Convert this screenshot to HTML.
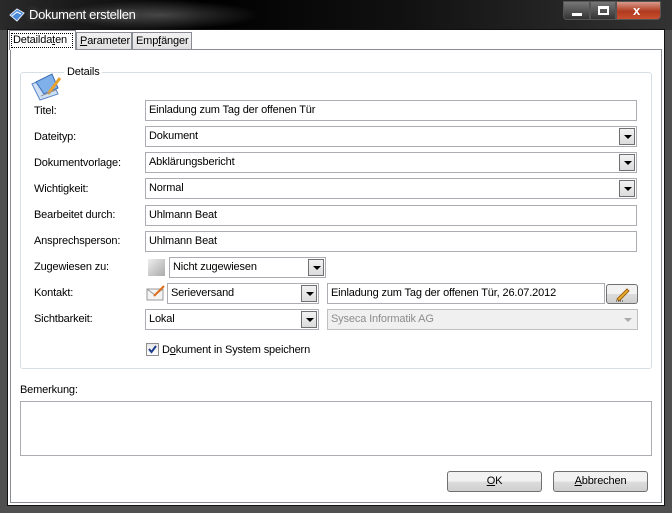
<!DOCTYPE html>
<html><head><meta charset="utf-8"><style>
*{box-sizing:border-box;margin:0;padding:0}
body{width:672px;height:513px;overflow:hidden;background:#505050;font-family:"Liberation Sans",sans-serif;font-size:11px;letter-spacing:-0.15px;color:#000;position:relative}
.a{position:absolute}
.t{position:absolute;white-space:nowrap;line-height:13px}
.in{position:absolute;border:1px solid #abadb3;background:#fff;height:21px;padding:3px 0 0 3px;white-space:nowrap;line-height:13px}
.dd{position:absolute;right:1px;top:1px;width:16px;height:17px;border:1px solid #707070;background:linear-gradient(#f2f2f2,#dcdcdc)}
.dd:after{content:"";position:absolute;left:4px;top:6px;border-left:4px solid transparent;border-right:4px solid transparent;border-top:4px solid #000}
.btn{position:absolute;border:1px solid #707070;border-radius:3px;background:linear-gradient(#f2f2f2 50%,#dddddd 50%,#cfcfcf);text-align:center;line-height:19px}
</style></head><body>
<div class="a" style="left:0;top:0;width:672px;height:30px;background:linear-gradient(90deg,#2a2a2a,#000 30%,#111 60%,#333)"></div>
<div class="a" style="left:60px;top:0;width:200px;height:30px;background:radial-gradient(ellipse at center,rgba(255,255,255,.25),rgba(255,255,255,0) 70%)"></div>
<svg class="a" style="left:8px;top:7px" width="18" height="16"><path d="M2 8 L9 2 L16 6 L9 14 Z" fill="#4a8ad8" stroke="#dfe9f7"/><path d="M4 9 L9 5 L13 7" stroke="#fff" fill="none"/></svg>
<div class="t" style="left:29px;top:8px;color:#fff;font-size:13px;letter-spacing:-0.3px;text-shadow:0 0 6px #fff5">Dokument erstellen</div>
<div class="a" style="left:563px;top:1px;width:27px;height:19px;border:1px solid #555;border-radius:0 0 0 4px;background:linear-gradient(#777,#333)"><div class="a" style="left:8px;top:11px;width:10px;height:3px;background:#fff"></div></div>
<div class="a" style="left:590px;top:1px;width:26px;height:19px;border:1px solid #555;background:linear-gradient(#777,#333)"><div class="a" style="left:7px;top:4px;width:11px;height:9px;border:2px solid #fff;border-top-width:3px"></div></div>
<div class="a" style="left:616px;top:1px;width:45px;height:19px;border:1px solid #555;border-radius:0 0 4px 0;background:linear-gradient(#d99a8a,#b03a20 55%,#c85030)"><div class="t" style="left:16px;top:2px;color:#fff;font-weight:bold;font-size:13px">x</div></div>
<div class="a" style="left:7px;top:29px;width:658px;height:477px;background:#fff;border:1px solid #111"></div>
<div class="a" style="left:10px;top:49px;width:652px;height:454px;border:1px solid #898c95;background:#fff"></div>
<div class="a" style="left:76px;top:32px;width:56px;height:18px;border:1px solid #898c95;background:linear-gradient(#f2f2f2,#e0e0e0)"></div>
<div class="t" style="left:80px;top:35px"><u>P</u>arameter</div>
<div class="a" style="left:132px;top:32px;width:60px;height:18px;border:1px solid #898c95;background:linear-gradient(#f2f2f2,#e0e0e0)"></div>
<div class="t" style="left:136px;top:35px">Emp<u>f</u>änger</div>
<div class="a" style="left:9px;top:30px;width:67px;height:20px;border:1px solid #898c95;border-bottom:none;background:#fff"></div>
<div class="a" style="left:11px;top:33px;width:62px;height:15px;border:1px dotted #000"></div>
<div class="t" style="left:13px;top:34px">Detailda<u>t</u>en</div>
<div class="a" style="left:20px;top:72px;width:632px;height:297px;border:1px solid #d5dfe5;border-radius:3px"></div>
<div class="a" style="left:64px;top:68px;width:38px;height:10px;background:#fff"></div>
<div class="t" style="left:67px;top:66px">Details</div>
<svg class="a" style="left:28px;top:70px" width="36" height="32"><path d="M4 14 L22 6 L30 24 L12 30 Z" fill="#cfe0f5" stroke="#5a86c8"/><path d="M8 12 L24 4 L30 18 L16 24 Z" fill="#7fb0ea" stroke="#3b6db5"/><path d="M20 24 L32 8" stroke="#e8a030" stroke-width="3"/><path d="M13 26 L28 20" stroke="#999"/></svg>
<div class="t" style="left:34px;top:105px">Titel:</div>
<div class="t" style="left:34px;top:131px">Dateityp:</div>
<div class="t" style="left:34px;top:157px">Dokumentvorlage:</div>
<div class="t" style="left:34px;top:183px">Wichtigkeit:</div>
<div class="t" style="left:34px;top:209px">Bearbeitet durch:</div>
<div class="t" style="left:34px;top:235px">Ansprechsperson:</div>
<div class="t" style="left:34px;top:261px">Zugewiesen zu:</div>
<div class="t" style="left:34px;top:287px">Kontakt:</div>
<div class="t" style="left:34px;top:313px">Sichtbarkeit:</div>
<div class="in" style="left:145px;top:100px;width:492px">Einladung zum Tag der offenen Tür</div>
<div class="in" style="left:145px;top:126px;width:492px">Dokument<div class="dd"></div></div>
<div class="in" style="left:145px;top:152px;width:492px">Abklärungsbericht<div class="dd"></div></div>
<div class="in" style="left:145px;top:178px;width:492px">Normal<div class="dd"></div></div>
<div class="in" style="left:145px;top:205px;width:492px">Uhlmann Beat</div>
<div class="in" style="left:145px;top:231px;width:492px">Uhlmann Beat</div>
<div class="a" style="left:148px;top:259px;width:17px;height:17px;background:linear-gradient(135deg,#eee,#aaa)"></div>
<div class="in" style="left:169px;top:257px;width:157px">Nicht zugewiesen<div class="dd"></div></div>
<svg class="a" style="left:146px;top:285px" width="20" height="16"><rect x="1" y="4" width="16" height="11" fill="#f4f4f4" stroke="#999"/><path d="M1 4 L9 10 L17 4" stroke="#999" fill="none"/><path d="M8 11 L18 1" stroke="#e07020" stroke-width="2"/></svg>
<div class="in" style="left:167px;top:283px;width:152px">Serieversand<div class="dd"></div></div>
<div class="in" style="left:327px;top:283px;width:278px">Einladung zum Tag der offenen Tür, 26.07.2012</div>
<div class="btn" style="left:606px;top:284px;width:32px;height:20px"><svg width="20" height="16" style="margin-top:1px"><path d="M5 13 L15 3 L17 5 L7 15 Z" fill="#e8b030" stroke="#a06010"/><path d="M4 15 L12 15" stroke="#333" stroke-dasharray="1 1"/></svg></div>
<div class="in" style="left:145px;top:309px;width:174px">Lokal<div class="dd"></div></div>
<div class="in" style="left:327px;top:309px;width:311px;background:#f0f0f0;border-color:#c0c0c0;color:#8d8d8d">Syseca Informatik AG<div class="a" style="right:5px;top:8px;border-left:4px solid transparent;border-right:4px solid transparent;border-top:4px solid #aaa"></div></div>
<div class="a" style="left:146px;top:343px;width:13px;height:13px;border:1px solid #8f8f8f;background:linear-gradient(#e8e8e8,#fff)"><svg width="11" height="11" style="position:absolute;left:0;top:0"><path d="M2 5 L4.5 8 L9 2" stroke="#1c3c8c" stroke-width="2" fill="none"/></svg></div>
<div class="t" style="left:162px;top:344px">D<u>o</u>kument in System speichern</div>
<div class="t" style="left:20px;top:384px">Bemerkung:</div>
<div class="a" style="left:20px;top:401px;width:632px;height:55px;border:1px solid #abadb3"></div>
<div class="btn" style="left:447px;top:471px;width:95px;height:21px"><u>O</u>K</div>
<div class="btn" style="left:553px;top:471px;width:95px;height:21px"><u>A</u>bbrechen</div>
</body></html>
